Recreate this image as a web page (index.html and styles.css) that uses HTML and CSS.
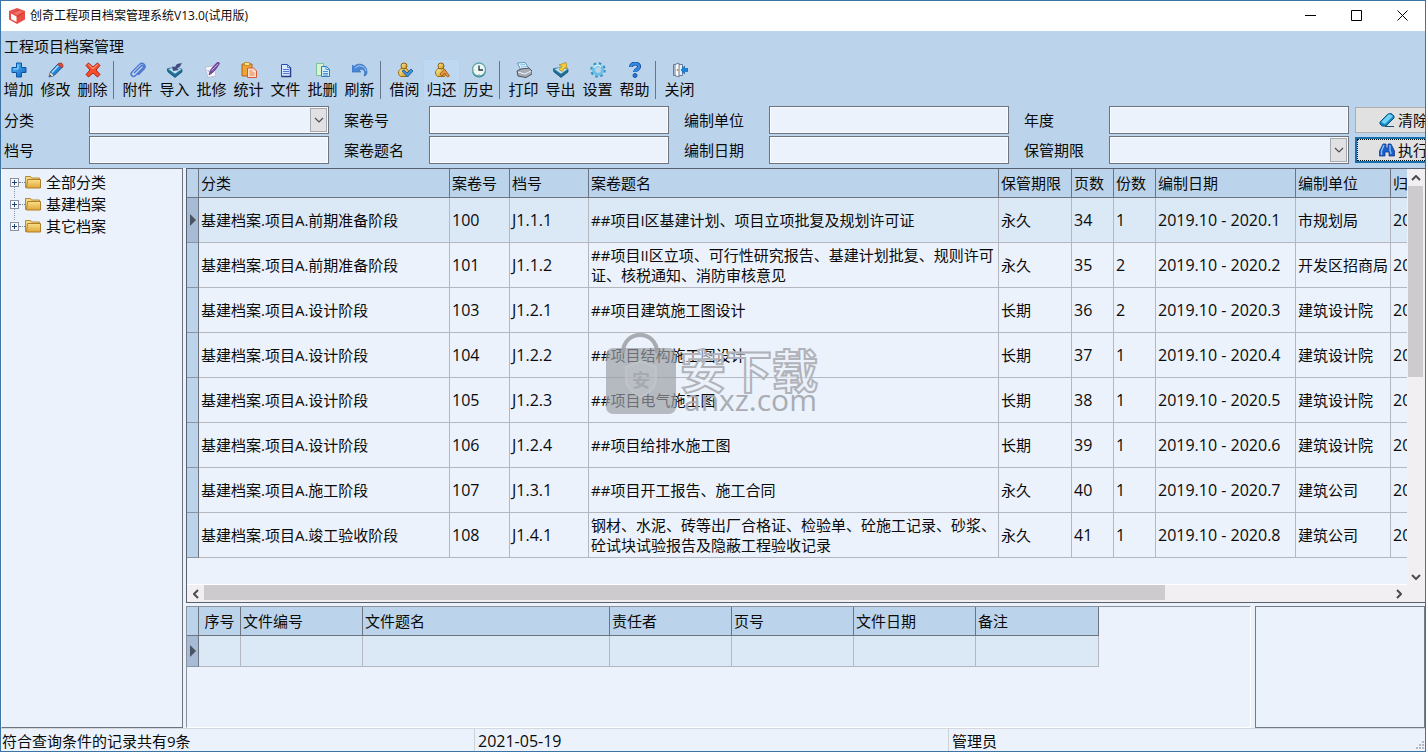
FILE: index.html
```html
<!DOCTYPE html>
<html lang="zh-CN">
<head>
<meta charset="utf-8">
<title>创奇工程项目档案管理系统V13.0(试用版)</title>
<link rel="stylesheet" href="styles.css">
</head>
<body>
<svg class="defs" aria-hidden="true">
  <defs>
    <linearGradient id="gold" x1="0" y1="0" x2="1" y2="1"><stop offset="0" stop-color="#fff3a0"/><stop offset="1" stop-color="#c98a12"/></linearGradient>
    <linearGradient id="blue" x1="0" y1="0" x2="1" y2="1"><stop offset="0" stop-color="#5cc0f5"/><stop offset="1" stop-color="#0a5fc4"/></linearGradient>
    <linearGradient id="folderFill" x1="0" y1="0" x2="0" y2="1"><stop offset="0" stop-color="#fbe08a"/><stop offset="1" stop-color="#dfa63a"/></linearGradient>
    <symbol id="folder" viewBox="0 0 16 14"><path d="M.5 12.500V1.500h5l1 1.500h8v9.500z" fill="#f3d98a" stroke="#b58a35"/><path d="M2.500 4.500h13v8.500h-14z" fill="url(#folderFill)" stroke="#b07f25"/></symbol>
    <symbol id="plus" viewBox="0 0 9 9"><rect x=".5" y=".5" width="8" height="8" fill="#f4f8ff" stroke="#8b93a3"/><path d="M2 4.500h5M4.500 2v5" stroke="#27406f"/></symbol>
    <symbol id="user" viewBox="0 0 16 16"><path d="M3.500 14.500C0 12 1.500 7 5 6.500h4c3 1 4 5 1.500 8z" fill="url(#gold)" stroke="#9a6b10"/><circle cx="7" cy="4" r="3" fill="url(#gold)" stroke="#8a6010"/></symbol>
    <symbol id="chevron" viewBox="0 0 10 6"><path d="M1 1l4 4 4-4" fill="none" stroke="#505050" stroke-width="1.200"/></symbol>
    <symbol id="arrow" viewBox="0 0 10 6"><path d="M1 1l4 4 4-4" fill="none" stroke="#4c4c50" stroke-width="2"/></symbol>
    <symbol id="marker" viewBox="0 0 6 12"><path d="M0 0l6 6-6 6z" fill="#4b5360"/></symbol>
  </defs>
</svg>
<div class="window">
  <header class="titlebar">
    <svg class="logo" viewBox="0 0 16 16"><path d="M8 0l8 3v8.500L8 16 0 11.500V3z" fill="#e94e46"/><path d="M2 4l6-2.500L14 4 8 7z" fill="#f27068"/><path d="M2 5.500l5.500 3v5.500L2 11z" fill="#fff"/><path d="M8 9l6-4M3.500 4.500L10 2" stroke="#c9322e"/></svg>
    <h1>创奇工程项目档案管理系统V13.0(试用版)</h1>
    <button class="caption" aria-label="最小化"><svg viewBox="0 0 11 11"><path d="M0 5.500h11" stroke="#000"/></svg></button>
    <button class="caption" aria-label="最大化"><svg viewBox="0 0 11 11"><path d="M.5.5h10v10H.5z" fill="none" stroke="#000"/></svg></button>
    <button class="caption" aria-label="关闭窗口"><svg viewBox="0 0 11 11"><path d="M.5.5l10 10M10.500.5l-10 10" stroke="#000"/></svg></button>
  </header>

  <section class="top">
    <h2>工程项目档案管理</h2>
    <div class="toolbar" role="toolbar">
      <button class="tool"><svg viewBox="0 0 16 16"><path d="M5.500 1h5v4.500H15v5h-4.500V15h-5v-4.500H1v-5h4.500z" fill="url(#blue)" stroke="#0b55a8"/><path d="M7 2.500v4.500H2.500" fill="none" stroke="#8fe0ff"/></svg>增加</button>
      <button class="tool"><svg viewBox="0 0 16 16"><path d="M1 15l1.500-5 8-8.500 4 3.500-8.500 8.500z" fill="#2583d8" stroke="#164a91"/><path d="M4 10.500l6.500-7" stroke="#a5e2ff" stroke-width="1.500"/><path d="M10 2.500l1.500-1.500h2L15 3v1.500l-1.500 1.500z" fill="#dd4b36" stroke="#a52f20" stroke-width=".7"/><path d="M1 15l1.500-4.500 3 3z" fill="#ffe5c0"/><path d="M1 15l1-2.500 1.500 1.500z" fill="#333"/></svg>修改</button>
      <button class="tool"><svg viewBox="0 0 16 16"><path d="M3.500 1L8 5l4.500-4L15 3.500 11 8l4 4.500-2.500 2.500L8 11l-4.500 4L1 12.500 5 8 1 3.500z" fill="#f4502e" stroke="#b32011"/><path d="M3.500 2.500L8 6.500l4.500-4" fill="none" stroke="#ffb19b"/></svg>删除</button>
      <span class="divider"></span>
      <button class="tool"><svg viewBox="0 0 16 16"><path d="M4 11l7-7c1.500-1.500 3.500.5 2 2l-7.500 7.500c-2.500 2.500-6-1-3.500-3.500L9.500 2.500c3-3 7.500 1 4.500 4.500L8 13" fill="none" stroke="#5178d0" stroke-width="1.500"/><path d="M3 10l7-7" stroke="#b7cffb" stroke-width=".7"/></svg>附件</button>
      <button class="tool"><svg viewBox="0 0 16 16"><path d="M0 7l3-1 6 5 6-4v3l-7 5.500L1 10z" fill="#1d6d98" stroke="#174e73" stroke-width=".7"/><path d="M1 7l7 5 7-5-7-2z" fill="#c4e3ef" stroke="#3c87a8" stroke-width=".7"/><path d="M15 1l-5 1-2 3-3-.5L6 9l6-1-2-1.500 3-2z" fill="#424b82"/></svg>导入</button>
      <button class="tool"><svg viewBox="0 0 16 16"><path d="M1 5l9-1 2 10-8 1.500z" fill="#f7f6fb" stroke="#b4b4cf" stroke-width=".8"/><path d="M3.500 8l3 3 3-1" fill="none" stroke="#83a5bd"/><path d="M5 13l1.500-5L12 1.500 14.500 0l1 1.500L12 7 8 11z" fill="#7b4fa6" stroke="#53317f" stroke-width=".7"/><path d="M7.500 8.500L14 2" stroke="#c9a4df"/></svg>批修</button>
      <button class="tool"><svg viewBox="0 0 16 16"><path d="M1 2h10v12H1z" fill="#f0a434" stroke="#ad631f"/><path d="M3.500.5h5v3h-5z" fill="#ffe18b" stroke="#b48329" stroke-width=".8"/><path d="M6.500 6h6l3 3v6.500h-9z" fill="#ffdfc9" stroke="#d65838"/><path d="M8.500 9h3M8.500 11h5M8.500 13h5" stroke="#e37e55"/></svg>统计</button>
      <button class="tool"><svg viewBox="0 0 16 16"><path d="M3.500 2.500h6l3 3v9h-9z" fill="#d7e7ff" stroke="#2b4fae"/><path d="M9.500 2.500v3h3M5 7.500h6M5 9.500h6M5 11.500h6" fill="none" stroke="#4c79cf"/><path d="M3.500 14.500h9v-9" fill="none" stroke="#2d3b8d" stroke-width="1.500"/></svg>文件</button>
      <button class="tool"><svg viewBox="0 0 16 16"><path d="M1.500 1.500h7v12h-7z" fill="#d9f3cf" stroke="#7cc1a0"/><path d="M6.500 4.500h5l3 3v7h-8z" fill="#d3edff" stroke="#327bb8"/><path d="M11 4.500v3h3.500M8 9.500h5M8 11.500h5M8 13h5" fill="none" stroke="#4698d2"/></svg>批删</button>
      <button class="tool"><svg viewBox="0 0 16 16"><path d="M0 3l2 1.500C6 0 15 2 15 10c0 3-2 4-3 4 2-5-1-8-5-6l2 2H0z" fill="#4c87d6" stroke="#346bb8" stroke-width=".7"/><path d="M3 6C7 2 13 4 14 9" fill="none" stroke="#a6cdf5"/></svg>刷新</button>
      <span class="divider"></span>
      <button class="tool"><svg viewBox="0 0 16 16"><use href="#user"/><path d="M5 9l2-1 3 3 4-4 2 2-5.500 6z" fill="#3f91db" stroke="#185393" stroke-width=".8"/></svg>借阅</button>
      <button class="tool tool-hot"><svg viewBox="0 0 16 16"><use href="#user"/><path d="M6 12l4.500-5 5 7-2 1-3-4-2.500 3z" fill="#e69947" stroke="#955115" stroke-width=".8"/></svg>归还</button>
      <button class="tool"><svg viewBox="0 0 16 16"><ellipse cx="8" cy="9" rx="7" ry="6.500" fill="#2f8898"/><circle cx="8" cy="7.500" r="6.500" fill="#eef9f4" stroke="#66a5ad" stroke-width="1.300"/><path d="M8 3.500v4.500h4" fill="none" stroke="#234" stroke-width="1.300"/><path d="M2.500 8h1M8 12v1" stroke="#c79b40"/></svg>历史</button>
      <span class="divider"></span>
      <button class="tool"><svg viewBox="0 0 16 16"><path d="M1.500 1L9 .5l4 6-8 2z" fill="#e9f7ff" stroke="#5795c0"/><path d="M1 9l4-2 8-1 3 3v3l-6 3.500L2 14z" fill="#a7adb7" stroke="#49505e"/><path d="M2 10l7 2 6-3" fill="none" stroke="#eef2f8"/><path d="M4 3l5-.5M5 5l6-.5" stroke="#83b9db"/></svg>打印</button>
      <button class="tool"><svg viewBox="0 0 16 16"><path d="M0 7l3-1 6 5 6-4v3l-7 5.500L1 10z" fill="#1d6d98" stroke="#174e73" stroke-width=".7"/><path d="M1 7l7 5 7-5-7-2z" fill="#c4e3ef" stroke="#3c87a8" stroke-width=".7"/><path d="M6 3l7-2.500 1 6-2-1-3 4-3-2 3-3z" fill="#f6cd35" stroke="#ac861b" stroke-width=".7"/></svg>导出</button>
      <button class="tool"><svg viewBox="0 0 16 16"><circle cx="8" cy="8" r="6.500" fill="none" stroke="#358fc0" stroke-width="2.500" stroke-dasharray="2.500 2.600"/><circle cx="8" cy="8" r="4.500" fill="none" stroke="#6cc0e6" stroke-width="3"/><path d="M4 6c1-3 5-4 7-1" fill="none" stroke="#d2f2fc" stroke-width="1.500"/></svg>设置</button>
      <button class="tool"><svg viewBox="0 0 16 16"><path d="M4 5c0-5 9-4 8 0 0 2-4 3-4 5" fill="none" stroke="#174c9b" stroke-width="4"/><path d="M4 5c0-5 9-4 8 0 0 2-4 3-4 5" fill="none" stroke="#358be1" stroke-width="2.300"/><circle cx="8" cy="13.500" r="2" fill="#267bd3" stroke="#174c9b"/></svg>帮助</button>
      <span class="divider"></span>
      <button class="tool"><svg viewBox="0 0 16 16"><path d="M1.500 2.500h9v11h-9z" fill="#e3edfa" stroke="#687b96"/><path d="M3 2.500l4-1.500v14l-4-1.500z" fill="#fff" stroke="#687b96"/><path d="M5.500 7v2" stroke="#c59234" stroke-width="1.500"/><path d="M9 8l3.500-4v2.500H16v3h-3.500V12z" fill="#1685df" stroke="#075da9" stroke-width=".6"/></svg>关闭</button>
    </div>

    <form class="filters">
      <label for="f1">分类</label>
      <span class="combo"><select id="f1"><option></option></select><span class="combo-btn"><svg viewBox="0 0 10 6"><use href="#chevron"/></svg></span></span>
      <label for="f2">案卷号</label><input type="text" id="f2">
      <label for="f3">编制单位</label><input type="text" id="f3">
      <label for="f4">年度</label><input type="text" id="f4">
      <button type="button" class="action"><svg viewBox="0 0 16 16"><path d="M1 10l8-8 3-.5 3 2.500v2l-8 8H3l-2-2z" fill="#1787c6" stroke="#085482"/><path d="M2 10l8-8 4 2-8 8z" fill="#6ed3f4"/><path d="M6 14.500h9" stroke="#174c77"/></svg>清除</button>
      <label for="f5">档号</label><input type="text" id="f5">
      <label for="f6">案卷题名</label><input type="text" id="f6">
      <label for="f7">编制日期</label><input type="text" id="f7">
      <label for="f8">保管期限</label>
      <span class="combo"><select id="f8"><option></option></select><span class="combo-btn"><svg viewBox="0 0 10 6"><use href="#chevron"/></svg></span></span>
      <button type="button" class="action action-default"><svg viewBox="0 0 16 16"><path d="M4 2h3v4h2V2h3l3.500 7v5H10v-4H6v4H.5V9z" fill="#1e5dc8" stroke="#123b8b" stroke-width=".8"/><path d="M5 3L2.500 9v4M11 3v5l1 4" fill="none" stroke="#83c3ff" stroke-width="1.300"/></svg>执行</button>
    </form>
  </section>

  <main class="workspace">
    <nav class="tree">
      <ul>
        <li><svg class="expander"><use href="#plus"/></svg><i></i><svg class="folder"><use href="#folder"/></svg>全部分类</li>
        <li><svg class="expander"><use href="#plus"/></svg><i></i><svg class="folder"><use href="#folder"/></svg>基建档案</li>
        <li><svg class="expander"><use href="#plus"/></svg><i></i><svg class="folder"><use href="#folder"/></svg>其它档案</li>
      </ul>
    </nav>

    <div class="content">
      <section class="records">
        <div class="records-view">
          <table class="grid grid-records">
            <colgroup><col class="c-mark"><col class="c-class"><col class="c-no"><col class="c-code"><col class="c-name"><col class="c-term"><col class="c-count"><col class="c-count"><col class="c-date"><col class="c-unit"><col class="c-last"></colgroup>
            <thead><tr><th></th><th>分类</th><th>案卷号</th><th>档号</th><th>案卷题名</th><th>保管期限</th><th>页数</th><th>份数</th><th>编制日期</th><th>编制单位</th><th>归</th></tr></thead>
            <tbody>
              <tr class="current"><th><svg class="marker"><use href="#marker"/></svg></th><td>基建档案.项目A.前期准备阶段</td><td class="num">100</td><td class="num">J1.1.1</td><td>##项目I区基建计划、项目立项批复及规划许可证</td><td>永久</td><td class="num">34</td><td class="num">1</td><td class="num">2019.10 - 2020.1</td><td>市规划局</td><td class="num">20</td></tr>
              <tr><th></th><td>基建档案.项目A.前期准备阶段</td><td class="num">101</td><td class="num">J1.1.2</td><td>##项目II区立项、可行性研究报告、基建计划批复、规则许可<br>证、核税通知、消防审核意见</td><td>永久</td><td class="num">35</td><td class="num">2</td><td class="num">2019.10 - 2020.2</td><td>开发区招商局</td><td class="num">20</td></tr>
              <tr><th></th><td>基建档案.项目A.设计阶段</td><td class="num">103</td><td class="num">J1.2.1</td><td>##项目建筑施工图设计</td><td>长期</td><td class="num">36</td><td class="num">2</td><td class="num">2019.10 - 2020.3</td><td>建筑设计院</td><td class="num">20</td></tr>
              <tr><th></th><td>基建档案.项目A.设计阶段</td><td class="num">104</td><td class="num">J1.2.2</td><td>##项目结构施工图设计</td><td>长期</td><td class="num">37</td><td class="num">1</td><td class="num">2019.10 - 2020.4</td><td>建筑设计院</td><td class="num">20</td></tr>
              <tr><th></th><td>基建档案.项目A.设计阶段</td><td class="num">105</td><td class="num">J1.2.3</td><td>##项目电气施工图</td><td>长期</td><td class="num">38</td><td class="num">1</td><td class="num">2019.10 - 2020.5</td><td>建筑设计院</td><td class="num">20</td></tr>
              <tr><th></th><td>基建档案.项目A.设计阶段</td><td class="num">106</td><td class="num">J1.2.4</td><td>##项目给排水施工图</td><td>长期</td><td class="num">39</td><td class="num">1</td><td class="num">2019.10 - 2020.6</td><td>建筑设计院</td><td class="num">20</td></tr>
              <tr><th></th><td>基建档案.项目A.施工阶段</td><td class="num">107</td><td class="num">J1.3.1</td><td>##项目开工报告、施工合同</td><td>永久</td><td class="num">40</td><td class="num">1</td><td class="num">2019.10 - 2020.7</td><td>建筑公司</td><td class="num">20</td></tr>
              <tr><th></th><td>基建档案.项目A.竣工验收阶段</td><td class="num">108</td><td class="num">J1.4.1</td><td>钢材、水泥、砖等出厂合格证、检验单、砼施工记录、砂浆、<br>砼试块试验报告及隐蔽工程验收记录</td><td>永久</td><td class="num">41</td><td class="num">1</td><td class="num">2019.10 - 2020.8</td><td>建筑公司</td><td class="num">20</td></tr>
            </tbody>
          </table>
          <svg class="watermark" viewBox="0 0 216 86" aria-hidden="true">
            <path d="M18 20C18-4 52-4 52 20" fill="none" stroke="#a8abb0" stroke-width="4"/>
            <rect x="1" y="15" width="70" height="66" rx="7" fill="#9b9ea3" fill-opacity=".68"/>
            <path d="M36 28l15 6v13c0 8-7 13-15 17-8-4-15-9-15-17V34z" fill="#c3c8cf" fill-opacity=".4" stroke="#c2c6cc" stroke-width="1.500"/>
            <text class="wm-small" x="27" y="54">安</text>
            <text class="wm-big" x="75" y="55">安下载</text>
            <text class="wm-url" x="79" y="78">anxz.com</text>
          </svg>
        </div>
        <div class="vscroll">
          <button class="up" aria-label="向上滚动"><svg viewBox="0 0 10 6"><use href="#arrow"/></svg></button>
          <div class="vthumb"></div>
          <button class="down" aria-label="向下滚动"><svg viewBox="0 0 10 6"><use href="#arrow"/></svg></button>
        </div>
        <div class="hscroll">
          <button class="left" aria-label="向左滚动"><svg viewBox="0 0 10 6"><use href="#arrow"/></svg></button>
          <div class="htrack"><div class="hthumb"></div></div>
          <button class="right" aria-label="向右滚动"><svg viewBox="0 0 10 6"><use href="#arrow"/></svg></button>
        </div>
      </section>

      <div class="lower">
        <section class="files">
          <table class="grid grid-files">
            <colgroup><col class="c-mark"><col class="f-seq"><col class="f-std"><col class="f-name"><col class="f-std"><col class="f-std"><col class="f-std"><col class="f-last"></colgroup>
            <thead><tr><th></th><th class="seq">序号</th><th>文件编号</th><th>文件题名</th><th>责任者</th><th>页号</th><th>文件日期</th><th>备注</th></tr></thead>
            <tbody><tr class="current"><th><svg class="marker"><use href="#marker"/></svg></th><td></td><td></td><td></td><td></td><td></td><td></td><td></td></tr></tbody>
          </table>
        </section>
        <aside class="preview"></aside>
      </div>
    </div>
  </main>

  <footer class="status">
    <span>符合查询条件的记录共有9条</span>
    <span class="num">2021-05-19</span>
    <span>管理员</span>
    <svg class="grip" viewBox="0 0 8 8"><path d="M6 0h2v2H6zM3 3h2v2H3zM6 3h2v2H6zM0 6h2v2H0zM3 6h2v2H3zM6 6h2v2H6z" fill="#b4b9c2"/></svg>
  </footer>
</div>
</body>
</html>
```

FILE: styles.css
```css
* { box-sizing: border-box; }

:root {
  --bar: #bcd4eb;
  --pane: #ebf2fc;
  --line: #6d7480;
  --cell-line: #b4b7bf;
  --current: #dbe9f7;
}

body {
  margin: 0;
  font: 15px/20px "Open Sans", "Noto Sans CJK SC", sans-serif;
  color: #0a0a0a;
}

h1, h2, ul { margin: 0; padding: 0; font-weight: 400; }

button, input, select { font: inherit; color: inherit; border-radius: 0; margin: 0; }

.defs { position: absolute; width: 0; height: 0; }

.window {
  display: flex;
  flex-direction: column;
  height: 100vh;
  border: 1px solid #3c74a6;
  background: var(--pane);
  overflow: hidden;
}

/* Title bar */
.titlebar { display: flex; align-items: center; flex: none; height: 30px; padding-left: 8px; background: #fff; }
.titlebar h1 { flex: 1; font-size: 12px; }
.logo { width: 16px; height: 16px; margin-right: 5px; }
.caption { width: 46px; height: 30px; padding: 0 0 2px; border: 0; background: none; display: flex; align-items: center; justify-content: center; }
.caption svg { width: 11px; height: 11px; }

/* Toolbar */
.top { flex: none; background: var(--bar); padding-bottom: 4px; overflow: hidden; }
.top h2 { font-size: 15px; line-height: 20px; padding: 5px 3px 3px; }
.toolbar { display: flex; height: 42px; margin-left: -1px; }
.tool { display: flex; flex-direction: column; align-items: center; width: 37px; padding: 2px 0 0; border: 1px solid transparent; background: none; line-height: 20px; white-space: nowrap; }
.tool svg { width: 16px; height: 16px; flex: none; margin-bottom: 1px; }
.tool-hot { border-color: #b3d3f3; background: #bfd8f1; }
.divider { width: 8px; padding: 2px 2px; display: flex; }
.divider::before { content: ""; width: 1px; height: 38px; background: #65758b; }

/* Filters */
.filters { display: grid; grid-template-columns: repeat(4, 85px 240px 15px) 100px; grid-template-rows: 28px 28px; row-gap: 2px; padding-left: 3px; margin-top: 5px; align-items: center; }
.filters label:nth-of-type(4n + 1) { grid-column: 1; }
.filters label:nth-of-type(4n + 2) { grid-column: 4; }
.filters label:nth-of-type(4n + 3) { grid-column: 7; }
.filters label:nth-of-type(4n) { grid-column: 10; }
.filters input, .combo { width: 240px; height: 28px; }
.filters input, .combo select { border: 1px solid var(--line); background: var(--pane); box-shadow: inset 0 0 0 1px #f8fbff; padding: 0 4px; }
.combo { position: relative; display: block; }
.combo select { width: 100%; height: 100%; appearance: none; }
.combo-btn { position: absolute; top: 2px; right: 2px; bottom: 2px; width: 17px; display: flex; align-items: center; justify-content: center; border: 1px solid #a6a9b0; background: #e1e1e4; pointer-events: none; }
.combo-btn svg { width: 10px; height: 6px; }
.action { grid-column: 13; margin-left: -9px; height: 26px; width: 108px; padding: 0 0 0 23px; display: flex; align-items: center; gap: 3px; border: 1px solid #adadad; background: #e1e1e1; white-space: nowrap; }
.action svg { width: 16px; height: 16px; flex: none; }
.action-default { border: 2px solid #176fa9; outline: 1px dotted #111; outline-offset: -3px; padding-left: 22px; }

/* Workspace */
.workspace { flex: 1; min-height: 0; display: flex; gap: 3px; }
.tree { width: 182px; flex: none; border: 1px solid var(--line); border-left-color: #fff; padding: 2px 0 0 8px; }
.tree ul { list-style: none; }
.tree li { display: flex; align-items: center; height: 22px; }
.expander { width: 9px; height: 9px; flex: none; }
.tree i { width: 6px; border-top: 1px dotted #777f8d; }
.folder { width: 16px; height: 14px; margin-right: 5px; }
.tree li:not(:last-child) { background: repeating-linear-gradient(#8c94a3 0 1px, transparent 1px 2px) 4px 16px / 1px 6px no-repeat; }
.tree li:not(:first-child) { background: repeating-linear-gradient(#8c94a3 0 1px, transparent 1px 2px) 4px 0 / 1px 6px no-repeat; }
.tree li:nth-child(2) {
  background:
    repeating-linear-gradient(#8c94a3 0 1px, transparent 1px 2px) 4px 0 / 1px 6px no-repeat,
    repeating-linear-gradient(#8c94a3 0 1px, transparent 1px 2px) 4px 16px / 1px 6px no-repeat;
}

.content { flex: 1; min-width: 0; display: flex; flex-direction: column; gap: 3px; }
.records { flex: 1; min-height: 0; display: grid; grid-template-columns: minmax(0, 1fr) 18px; grid-template-rows: minmax(0, 1fr) 17px; border: 1px solid #59616f; border-right: 0; }
.records-view { position: relative; overflow: hidden; border-bottom: 1px solid #fff; }

.grid { table-layout: fixed; border-collapse: separate; border-spacing: 0; }
.grid-records { width: 1300px; }
.grid-files { width: 912px; }
.c-mark { width: 12px; }
.c-class { width: 251px; }
.c-no { width: 60px; }
.c-code { width: 79px; }
.c-name { width: 410px; }
.c-term { width: 73px; }
.c-count { width: 42px; }
.c-date { width: 140px; }
.c-unit { width: 95px; }
.f-seq { width: 42px; }
.f-std { width: 122px; }
.f-name { width: 247px; }
.f-last { width: 123px; }
.grid th, .grid td { padding: 0 0 0 2px; text-align: left; font-weight: 400; white-space: nowrap; vertical-align: middle; border-right: 1px solid var(--cell-line); border-bottom: 1px solid var(--cell-line); }
.grid th { background: var(--bar); border-color: var(--line); }
.grid thead th { height: 29px; }
.grid tbody td, .grid tbody th { height: 45px; }
.grid-files tbody td, .grid-files tbody th { height: 31px; }
.grid .seq { text-align: center; padding: 0; }
.grid tbody th { padding: 0 0 0 3px; line-height: 0; border-bottom-color: #8a93a0; }
.current td { background: var(--current); }
.grid .current th { background: #a6bcd6; }
.marker { width: 6px; height: 12px; }
.num { font-size: 16px; }

/* Scroll bars */
.vscroll, .hscroll { background: #f1eff2; display: flex; }
.vscroll { flex-direction: column; align-items: center; padding-right: 1px; }
.hscroll { grid-column: 1 / -1; padding-right: 18px; }
.vscroll button, .hscroll button { width: 17px; height: 17px; flex: none; padding: 0; border: 0; background: none; display: flex; align-items: center; justify-content: center; }
.vscroll svg, .hscroll svg { width: 10px; height: 6px; }
.up svg { transform: rotate(180deg); }
.left svg { transform: rotate(90deg); }
.right svg { transform: rotate(-90deg); }
.vthumb { width: 15px; height: 46%; background: #cdcbce; }
.down { margin-top: auto; }
.htrack { flex: 1; display: flex; }
.hthumb { width: 81%; height: 15px; background: #cdcbce; }

/* Lower panes */
.lower { flex: none; height: 122px; display: flex; gap: 4px; }
.files { flex: 1; min-width: 0; overflow: hidden; border: 1px solid #8a919c; border-right-color: #fff; border-bottom-color: #fff; }
.preview { width: 170px; border: 1px solid #737b88; }

/* Status bar */
.status { flex: none; display: grid; grid-template-columns: 473fr 474fr 477fr; height: 23px; border-top: 1px solid #d4d7dd; position: relative; }
.status span { padding: 2px 0 0 1px; white-space: nowrap; }
.status span + span { padding-left: 3px; border-left: 1px solid #cdd2da; }
.grip { position: absolute; right: 1px; bottom: 2px; width: 8px; height: 8px; }

/* Site mark over the grid */
.watermark { position: absolute; left: 418px; top: 164px; width: 216px; height: 86px; pointer-events: none; }
.wm-small { font-size: 18px; font-weight: 700; fill: #a6a9af; }
.wm-big { font-size: 46px; font-weight: 700; fill: #ebf2fc; fill-opacity: .5; stroke: #b0b3b9; stroke-width: 2px; }
.wm-url { font-size: 30px; fill: #a9acb2; }
```
